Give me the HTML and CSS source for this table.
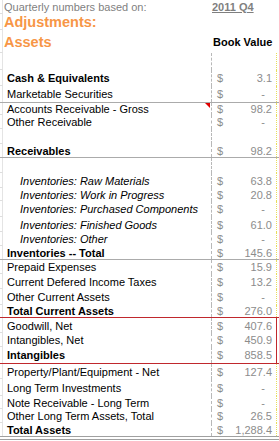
FILE: index.html
```html
<!DOCTYPE html>
<html>
<head>
<meta charset="utf-8">
<link rel="stylesheet" href="styles.css">
</head>
<body>
<div class="sheet">
  <div class="row"><span class="stub"></span><span class="lbl head note">Quarterly numbers based on:</span><span class="wide period">2011 Q4</span></div>
  <div class="row"><span class="stub"></span><span class="lbl head title">Adjustments:</span></div>
  <div class="row"><span class="stub"></span><span class="lbl head title">Assets</span><span class="wide colhead">Book Value</span></div>
  <div class="row"><span class="stub"></span><span class="lbl"></span><span class="cur"></span><span class="val"></span></div>

  <div class="row"><span class="stub"></span><span class="lbl b">Cash &amp; Equivalents</span><span class="cur">$</span><span class="val">3.1</span></div>
  <div class="row line"><span class="stub"></span><span class="lbl">Marketable Securities</span><span class="cur">$</span><span class="val zero">-</span></div>
  <div class="row"><span class="stub"></span><span class="lbl flagged">Accounts Receivable - Gross<i class="flag"></i></span><span class="cur">$</span><span class="val">98.2</span></div>
  <div class="row"><span class="stub"></span><span class="lbl">Other Receivable</span><span class="cur">$</span><span class="val zero">-</span></div>
  <div class="row"><span class="stub"></span><span class="lbl"></span><span class="cur"></span><span class="val"></span></div>
  <div class="row line"><span class="stub"></span><span class="lbl b">Receivables</span><span class="cur">$</span><span class="val">98.2</span></div>
  <div class="row"><span class="stub"></span><span class="lbl"></span><span class="cur"></span><span class="val"></span></div>

  <div class="row"><span class="stub"></span><span class="lbl it">Inventories: Raw Materials</span><span class="cur">$</span><span class="val">63.8</span></div>
  <div class="row"><span class="stub"></span><span class="lbl it">Inventories: Work in Progress</span><span class="cur">$</span><span class="val">20.8</span></div>
  <div class="row"><span class="stub"></span><span class="lbl it">Inventories: Purchased Components</span><span class="cur">$</span><span class="val zero">-</span></div>
  <div class="row"><span class="stub"></span><span class="lbl it">Inventories: Finished Goods</span><span class="cur">$</span><span class="val">61.0</span></div>
  <div class="row"><span class="stub"></span><span class="lbl it">Inventories: Other</span><span class="cur">$</span><span class="val zero">-</span></div>
  <div class="row line"><span class="stub"></span><span class="lbl b">Inventories -- Total</span><span class="cur">$</span><span class="val">145.6</span></div>

  <div class="row"><span class="stub"></span><span class="lbl">Prepaid Expenses</span><span class="cur">$</span><span class="val">15.9</span></div>
  <div class="row"><span class="stub"></span><span class="lbl">Current Defered Income Taxes</span><span class="cur">$</span><span class="val">13.2</span></div>
  <div class="row"><span class="stub"></span><span class="lbl">Other Current Assets</span><span class="cur">$</span><span class="val zero">-</span></div>
  <div class="row redline"><span class="stub"></span><span class="lbl b">Total Current Assets</span><span class="cur">$</span><span class="val">276.0</span></div>

  <div class="row boxed"><span class="stub"></span><span class="lbl">Goodwill, Net</span><span class="cur">$</span><span class="val">407.6</span></div>
  <div class="row boxed"><span class="stub"></span><span class="lbl">Intangibles, Net</span><span class="cur">$</span><span class="val">450.9</span></div>
  <div class="row boxed redline"><span class="stub"></span><span class="lbl b">Intangibles</span><span class="cur">$</span><span class="val">858.5</span></div>

  <div class="row"><span class="stub"></span><span class="lbl">Property/Plant/Equipment - Net</span><span class="cur">$</span><span class="val">127.4</span></div>
  <div class="row"><span class="stub"></span><span class="lbl">Long Term Investments</span><span class="cur">$</span><span class="val zero">-</span></div>
  <div class="row"><span class="stub"></span><span class="lbl">Note Receivable - Long Term</span><span class="cur">$</span><span class="val zero">-</span></div>
  <div class="row"><span class="stub"></span><span class="lbl">Other Long Term Assets, Total</span><span class="cur">$</span><span class="val">26.5</span></div>
  <div class="row total"><span class="stub"></span><span class="lbl b">Total Assets</span><span class="cur">$</span><span class="val">1,288.4</span></div>
</div>
</body>
</html>
```

FILE: styles.css
```css
html, body {
  margin: 0;
  padding: 0;
  background: #ffffff;
}

body {
  font-family: "Liberation Sans", Arial, sans-serif;
  font-size: 11px;
  color: #000000;
}

.sheet {
  width: 279px;
  display: grid;
  grid-template-rows:
    14px 16px 23px 17px
    16px 17px 12px 14px 15px 14px 15px
    15px 13px 16px 15px 14px 14px
    14px 15px 16px 13px
    15px 14px 17px
    15px 17px 13px 14px 17px;
}

.row {
  display: grid;
  grid-template-columns: 3px 208px 18px 48px 2px;
  box-sizing: border-box;
}

.row > span {
  display: flex;
  align-items: center;
  white-space: nowrap;
  box-sizing: border-box;
}

.stub {
  border-right: 1px solid #e4e4e4;
  border-bottom: 1px solid #dedede;
}

.line .stub,
.redline .stub,
.total .stub {
  border-bottom: 0;
}

.lbl {
  padding-left: 4px;
}

.lbl.head {
  padding-left: 1px;
}

.note {
  color: #7f7f7f;
}

.title {
  color: #f79646;
  font-weight: bold;
  font-size: 14.5px;
}

.wide {
  grid-column: 3 / 6;
}

.period {
  padding-left: 1px;
  color: #7f7f7f;
  font-weight: bold;
  text-decoration: underline;
}

.colhead {
  padding-left: 2px;
  font-weight: bold;
}

.b {
  font-weight: bold;
}

.it {
  font-style: italic;
  padding-left: 17px;
}

.cur {
  border-left: 1px dashed #b8b8b8;
  padding-left: 5px;
  color: #8c8c8c;
}

.val {
  justify-content: flex-end;
  padding-right: 4px;
  border-right: 1px dotted #e8dc5c;
  color: #8c8c8c;
}

.val.zero {
  padding-right: 11px;
}

.line {
  border-bottom: 1px solid #ababab;
}

.redline {
  border-bottom: 1px solid #c0282d;
}

.boxed .val {
  border-right: 1px solid #c0282d;
}

.total {
  border-bottom: 4px double #a0a0a0;
}

.flagged {
  position: relative;
}

.flag {
  position: absolute;
  top: 0;
  right: 1px;
  width: 0;
  height: 0;
  border-top: 5px solid #e00000;
  border-left: 5px solid transparent;
}
```
